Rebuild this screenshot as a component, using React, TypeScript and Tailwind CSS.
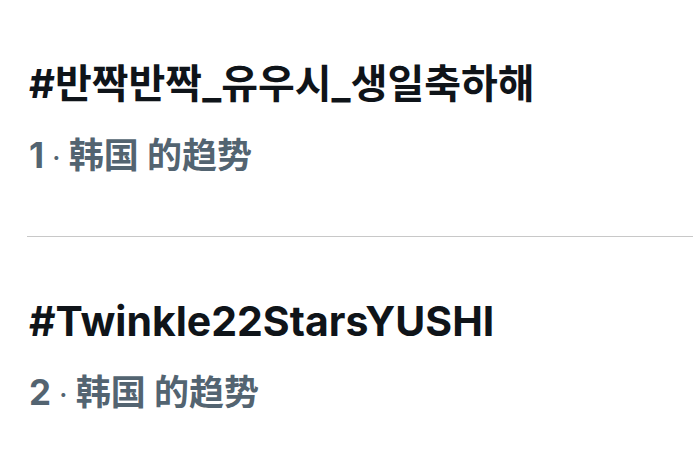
export default function App() {
  const items = [
    { tag: "#반짝반짝_유우시_생일축하해", rank: "1", size: "text-[40px]" },
    { tag: "#Twinkle22StarsYUSHI", rank: "2", size: "text-[41px]" },
  ];
  return (
    <div className="w-[693px] h-[467px] bg-white overflow-hidden">
      {items.map((it, i) => (
        <div key={i}>
          {i > 0 && <div className="ml-[27px] h-[1px] bg-[#c8c8c8]" />}
          <div className={i === 0 ? "pl-[29px] pt-[60px] pb-[61px]" : "pl-[29px] pt-[60px]"}>
            <div
              className={`${it.size} h-[48px] leading-[48px] font-bold text-[#0f1419] whitespace-nowrap`}
              style={{ fontFamily: '"Inter", "Noto Sans CJK KR", sans-serif' }}
            >
              {it.tag}
            </div>
            <div
              className="mt-[27px] h-[40px] text-[35px] leading-[40px] font-bold text-[#536471] whitespace-nowrap"
              style={{ fontFamily: '"Inter", "Noto Sans CJK SC", sans-serif' }}
            >
              {it.rank}
              <span className="ml-[8px] mr-[8px] font-normal text-[30px]">·</span>韩国 的趋势
            </div>
          </div>
        </div>
      ))}
    </div>
  );
}
